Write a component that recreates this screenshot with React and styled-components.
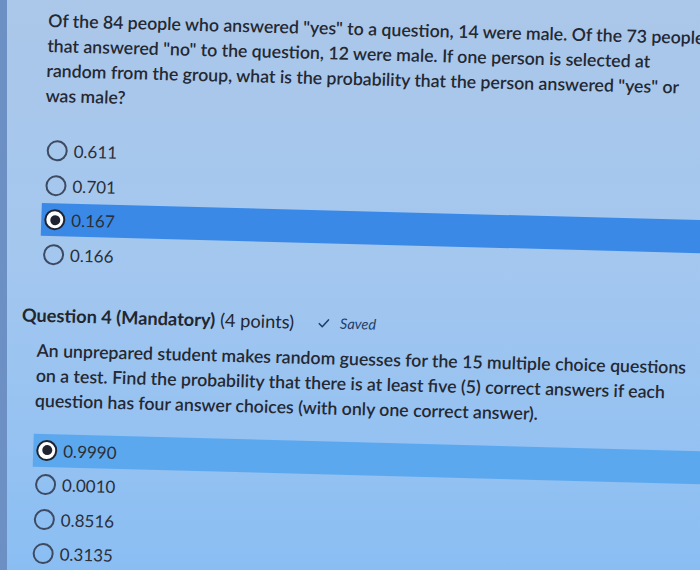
import styled, { createGlobalStyle } from 'styled-components';

const GlobalStyle = createGlobalStyle`
  html, body { margin: 0; padding: 0; }
  body {
    font-family: Lato, "Open Sans", "Liberation Sans", sans-serif;
    overflow: hidden;
  }
`;

const Page = styled.div`
  width: 700px;
  height: 570px;
  box-sizing: border-box;
  overflow: hidden;
  border-left: 7px solid #6d90c4;
  background: linear-gradient(180deg, #abc7e9 0%, #a4c7ef 45%, #8abef3 100%);
`;

// the screen was photographed slightly askew
const Sheet = styled.div`
  width: 800px;
  padding: 7px 0 0 16px;
  box-sizing: border-box;
  transform: rotate(1.5deg) skewX(-0.5deg);
  transform-origin: 0 285px;
  color: #262a33;
`;

const Body = styled.div`
  margin-left: 16px;
`;

const Prompt = styled.p`
  margin: ${p => p.$top || 0}px 0 0;
  font-size: 17.7px;
  line-height: 25px;
  font-weight: 600;
  white-space: nowrap;
  color: #242832;
`;

const OptionList = styled.div`
  display: flex;
  flex-direction: column;
  gap: 1.5px;
  margin-top: ${p => p.$gap}px;
`;

const tones = {
  strong: '#3a89e7',
  soft: '#5ca8ee',
};

const OptionRow = styled.div`
  display: flex;
  align-items: center;
  gap: 6px;
  height: 33px;
  padding-left: 3px;
  background: ${p => (p.$tone ? tones[p.$tone] : 'transparent')};
`;

const Radio = styled.span`
  width: 21px;
  height: 21px;
  box-sizing: border-box;
  border-radius: 50%;
  border: 2px solid ${p => (p.$checked ? '#1f2430' : '#3d4a62')};
  background: ${p => (p.$checked ? '#fff' : 'transparent')};
  display: grid;
  place-items: center;
  flex-shrink: 0;

  &::after {
    content: '';
    width: 10px;
    height: 10px;
    border-radius: 50%;
    background: #1f2430;
    display: ${p => (p.$checked ? 'block' : 'none')};
  }
`;

const OptionLabel = styled.span`
  font-size: 17px;
  color: #2a2f3a;
`;

const QuestionHeader = styled.div`
  display: flex;
  align-items: baseline;
  margin-top: 32px;
  line-height: 24px;
  font-size: 18.2px;
  color: #22262e;
`;

const Title = styled.span`
  font-weight: 700;
`;

const Points = styled.span`
  font-weight: 400;
  margin-left: 5px;
`;

const SavedTag = styled.span`
  display: inline-flex;
  align-items: center;
  gap: 10px;
  margin-left: 24px;
  font-size: 14.5px;
  font-style: italic;
  color: #22406a;

  svg {
    width: 12px;
    height: 12px;
  }
`;

function Option({ label, checked, tone }) {
  return (
    <OptionRow $tone={checked ? tone : null}>
      <Radio $checked={checked} />
      <OptionLabel>{label}</OptionLabel>
    </OptionRow>
  );
}

export default function App() {
  const q3 = ['0.611', '0.701', '0.167', '0.166'];
  const q4 = ['0.9990', '0.0010', '0.8516', '0.3135'];

  return (
    <Page>
      <GlobalStyle />
      <Sheet>
        <Body>
          <Prompt>
            Of the 84 people who answered "yes" to a question, 14 were male. Of the 73 people
            <br />
            that answered "no" to the question, 12 were male. If one person is selected at
            <br />
            random from the group, what is the probability that the person answered "yes" or
            <br />
            was male?
          </Prompt>
          <OptionList $gap={26}>
            {q3.map(v => (
              <Option key={v} label={v} checked={v === '0.167'} tone="strong" />
            ))}
          </OptionList>
        </Body>

        <QuestionHeader>
          <Title>Question 4 (Mandatory)</Title>
          <Points>(4 points)</Points>
          <SavedTag>
            <svg viewBox="0 0 12 12" fill="none" stroke="currentColor" strokeWidth="1.6" strokeLinecap="round" strokeLinejoin="round">
              <polyline points="1.5,6.5 4.5,9.5 10.5,2.5" />
            </svg>
            Saved
          </SavedTag>
        </QuestionHeader>

        <Body>
          <Prompt $top={10}>
            An unprepared student makes random guesses for the 15 multiple choice questions
            <br />
            on a test. Find the probability that there is at least five (5) correct answers if each
            <br />
            question has four answer choices (with only one correct answer).
          </Prompt>
          <OptionList $gap={21}>
            {q4.map(v => (
              <Option key={v} label={v} checked={v === '0.9990'} tone="soft" />
            ))}
          </OptionList>
        </Body>
      </Sheet>
    </Page>
  );
}
